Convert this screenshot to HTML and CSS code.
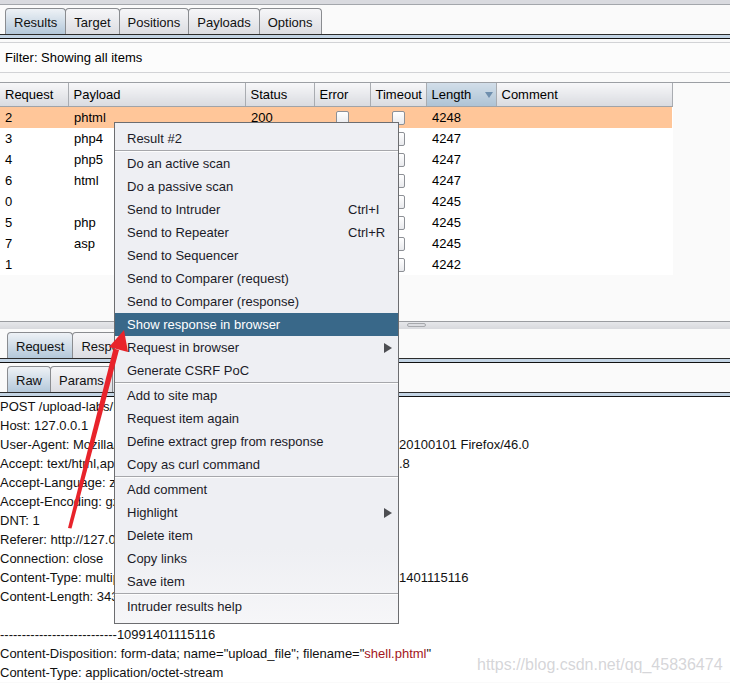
FILE: index.html
```html
<!DOCTYPE html>
<html lang="en">
<head>
    <meta charset="UTF-8">
    <title>Intruder attack - Results</title>
    <link rel="stylesheet" href="styles.css">
</head>
<body>
    <div class="topbar"></div>

    <div class="tabs">
        <div class="tab active">Results</div>
        <div class="tab">Target</div>
        <div class="tab">Positions</div>
        <div class="tab">Payloads</div>
        <div class="tab">Options</div>
    </div>
    <div class="tab-line"></div>

    <div class="filter">Filter: Showing all items</div>

    <div class="results">
        <table class="grid">
            <colgroup>
                <col style="width: 68px">
                <col style="width: 177px">
                <col style="width: 69px">
                <col style="width: 56px">
                <col style="width: 56px">
                <col style="width: 70px">
                <col style="width: 176px">
            </colgroup>
            <thead>
                <tr>
                    <th>Request</th>
                    <th>Payload</th>
                    <th>Status</th>
                    <th>Error</th>
                    <th>Timeout</th>
                    <th class="sorted">Length <span class="sort-arrow"></span></th>
                    <th>Comment</th>
                </tr>
            </thead>
            <tbody>
                <tr class="selected">
                    <td>2</td><td>phtml</td><td>200</td>
                    <td class="check"><span class="box"></span></td>
                    <td class="check"><span class="box"></span></td>
                    <td>4248</td><td></td>
                </tr>
                <tr>
                    <td>3</td><td>php4</td><td>200</td>
                    <td class="check"><span class="box"></span></td>
                    <td class="check"><span class="box"></span></td>
                    <td>4247</td><td></td>
                </tr>
                <tr>
                    <td>4</td><td>php5</td><td>200</td>
                    <td class="check"><span class="box"></span></td>
                    <td class="check"><span class="box"></span></td>
                    <td>4247</td><td></td>
                </tr>
                <tr>
                    <td>6</td><td>html</td><td>200</td>
                    <td class="check"><span class="box"></span></td>
                    <td class="check"><span class="box"></span></td>
                    <td>4247</td><td></td>
                </tr>
                <tr>
                    <td>0</td><td></td><td>200</td>
                    <td class="check"><span class="box"></span></td>
                    <td class="check"><span class="box"></span></td>
                    <td>4245</td><td></td>
                </tr>
                <tr>
                    <td>5</td><td>php</td><td>200</td>
                    <td class="check"><span class="box"></span></td>
                    <td class="check"><span class="box"></span></td>
                    <td>4245</td><td></td>
                </tr>
                <tr>
                    <td>7</td><td>asp</td><td>200</td>
                    <td class="check"><span class="box"></span></td>
                    <td class="check"><span class="box"></span></td>
                    <td>4245</td><td></td>
                </tr>
                <tr>
                    <td>1</td><td></td><td>200</td>
                    <td class="check"><span class="box"></span></td>
                    <td class="check"><span class="box"></span></td>
                    <td>4242</td><td></td>
                </tr>
            </tbody>
        </table>
    </div>

    <div class="splitter"><span class="knob"></span></div>

    <div class="tabs tabs-lower">
        <div class="tab active">Request</div>
        <div class="tab">Response</div>
    </div>
    <div class="tab-line"></div>

    <div class="tabs tabs-sub">
        <div class="tab active">Raw</div>
        <div class="tab">Params</div>
        <div class="tab">Headers</div>
        <div class="tab">Hex</div>
    </div>
    <div class="tab-line"></div>

    <div class="raw">
        <div><span class="cut">POST /upload-labs/Pass-03/index.php HTTP/1.1</span></div>
        <div>Host: 127.0.0.1</div>
        <div><span class="cut">User-Agent: Mozilla/5.0 (Windows NT 10.0; WOW64; rv:46.0) Gecko/</span>20100101 Firefox/46.0</div>
        <div><span class="cut">Accept: text/html,application/xhtml+xml,application/xml;q=0.9,*/*;q=0</span>.8</div>
        <div><span class="cut">Accept-Language: zh-CN,zh;q=0.8,en-US;q=0.5,en;q=0.3</span></div>
        <div><span class="cut">Accept-Encoding: gzip, deflate</span></div>
        <div>DNT: 1</div>
        <div><span class="cut">Referer: http://127.0.0.1/upload-labs/Pass-03/index.php</span></div>
        <div>Connection: close</div>
        <div><span class="cut">Content-Type: multipart/form-data; boundary=---------------------------1099</span>1401115116</div>
        <div><span class="cut">Content-Length: 343</span></div>
        <div>&nbsp;</div>
        <div>---------------------------10991401115116</div>
        <div>Content-Disposition: form-data; name="upload_file"; filename="<span class="str">shell.phtml</span>"</div>
        <div>Content-Type: application/octet-stream</div>
    </div>

    <div class="menu">
        <div class="item">Result #2</div>
        <div class="sep"></div>
        <div class="item">Do an active scan</div>
        <div class="item">Do a passive scan</div>
        <div class="item">Send to Intruder <span class="key">Ctrl+I</span></div>
        <div class="item">Send to Repeater <span class="key">Ctrl+R</span></div>
        <div class="item">Send to Sequencer</div>
        <div class="item">Send to Comparer (request)</div>
        <div class="item">Send to Comparer (response)</div>
        <div class="item hover">Show response in browser</div>
        <div class="item">Request in browser <span class="sub"></span></div>
        <div class="item">Generate CSRF PoC</div>
        <div class="sep"></div>
        <div class="item">Add to site map</div>
        <div class="item">Request item again</div>
        <div class="item">Define extract grep from response</div>
        <div class="item">Copy as curl command</div>
        <div class="sep"></div>
        <div class="item">Add comment</div>
        <div class="item">Highlight <span class="sub"></span></div>
        <div class="item">Delete item</div>
        <div class="item">Copy links</div>
        <div class="item">Save item</div>
        <div class="sep"></div>
        <div class="item">Intruder results help</div>
    </div>

    <!-- red annotation arrow pointing at the highlighted entry -->
    <svg class="annotation" width="730" height="683" viewBox="0 0 730 683">
        <polygon points="68,528 71.5,528.5 119,350 113.5,348.5" fill="#e8232b"/>
        <polygon points="124,330 109,347 128,352" fill="#e8232b"/>
    </svg>

    <div class="watermark">https://blog.csdn.net/qq_45836474</div>
</body>
</html>
```

FILE: styles.css
```css
body {
    margin: 0;
    padding: 0;
    width: 730px;
    height: 683px;
    overflow: hidden;
    position: relative;
    background: #fafafa;
    font-family: "Liberation Sans", Arial, sans-serif;
    font-size: 13px;
    color: #000;
}

.topbar {
    height: 4px;
    background: #d9dadf;
    border-bottom: 1px solid #a3a6ab;
}

/* tab strips */
.tabs {
    display: flex;
    padding-left: 5px;
    margin-top: 3px;
    height: 26px;
}
.tab {
    display: flex;
    align-items: center;
    padding: 1px 8px 0 8px;
    border: 1px solid #8a8c90;
    border-bottom: none;
    border-radius: 4px 4px 0 0;
    background: linear-gradient(#f6f6f8, #dcdde2);
    color: #111;
    margin-right: -1px;
}
.tab.active {
    background: linear-gradient(#eef2f6, #b4c8da);
}
.tab-line {
    height: 3px;
    border-top: 1px solid #2c2c2c;
    border-bottom: 1px solid #111;
    background: #c3d4e4;
}
.tabs-lower {
    margin-top: 3px;
    padding-left: 7px;
}
.tabs-sub {
    margin-top: 3px;
    padding-left: 7px;
}

/* filter bar */
.filter {
    margin-top: 3px;
    height: 29px;
    line-height: 29px;
    padding-left: 5px;
    border-top: 1px solid #d2d3d6;
    border-bottom: 1px solid #d2d3d6;
    background: #fcfcfc;
}

/* results table */
.results {
    margin-top: 9px;
    height: 238px;
    border-top: 1px solid #9c9fa4;
}
.grid {
    border-collapse: collapse;
    table-layout: fixed;
    width: 672px;
    background: #fff;
}
.grid th {
    height: 23px;
    padding: 0 5px;
    text-align: left;
    font-weight: normal;
    background: linear-gradient(#f7f7f9, #d9dbe0);
    border-right: 1px solid #a9acb1;
    border-bottom: 1px solid #a0a3a8;
    white-space: nowrap;
}
.grid th.sorted {
    background: linear-gradient(#d2dee9, #aec3d5);
    position: relative;
}
.sort-arrow {
    position: absolute;
    right: 3px;
    top: 9px;
    border-left: 4px solid transparent;
    border-right: 4px solid transparent;
    border-top: 6px solid #6f8fae;
}
.grid td {
    height: 21px;
    padding: 0 6px;
    white-space: nowrap;
    overflow: hidden;
}
.grid td:first-child {
    padding-left: 5px;
}
.grid tr.selected td {
    background: #ffc699;
}
.grid td.check {
    text-align: center;
    padding: 0;
}
.box {
    display: inline-block;
    width: 11px;
    height: 12px;
    border: 1px solid #8d9096;
    border-radius: 2px;
    background: linear-gradient(#fff, #e9eaed);
    vertical-align: middle;
}

/* divider between the halves */
.splitter {
    height: 7px;
    border-top: 1px solid #9a9ca0;
    background: linear-gradient(#e6e7ea, #d8d9dd);
    position: relative;
}
.knob {
    position: absolute;
    left: 407px;
    top: 1px;
    width: 17px;
    height: 2px;
    border: 1px solid #a7a9ad;
    border-radius: 2px;
    background: #dcdde1;
}

/* raw request */
.raw {
    background: #fff;
    line-height: 19px;
    white-space: nowrap;
    color: #111;
}
.cut {
    display: inline-block;
    width: 399px;
    overflow: hidden;
    vertical-align: top;
}
.str {
    color: #a3151b;
}

/* context menu */
.menu {
    position: absolute;
    left: 114px;
    top: 122px;
    width: 283px;
    padding: 4px 0 5px 0;
    border: 1px solid #6c6d70;
    background: linear-gradient(#eeeff3 85%, #f6f6f8);
    color: #1b1b28;
}
.menu .item {
    display: flex;
    align-items: center;
    height: 23px;
    padding: 0 12px;
    white-space: nowrap;
}
.menu .item.hover {
    background: #396889;
    color: #fff;
}
.menu .key {
    margin-left: auto;
    width: 38px;
}
.menu .sub {
    margin-left: auto;
    margin-right: -6px;
    border-top: 5px solid transparent;
    border-bottom: 5px solid transparent;
    border-left: 8px solid #4d4e52;
}
.menu .sep {
    height: 1px;
    border-bottom: 1px solid #fdfdfd;
    background: #a6a7ab;
}

.annotation {
    position: absolute;
    left: 0;
    top: 0;
    pointer-events: none;
}

.watermark {
    position: absolute;
    left: 477px;
    top: 656px;
    font-size: 16px;
    color: rgba(190, 190, 195, 0.65);
    white-space: nowrap;
}
```
